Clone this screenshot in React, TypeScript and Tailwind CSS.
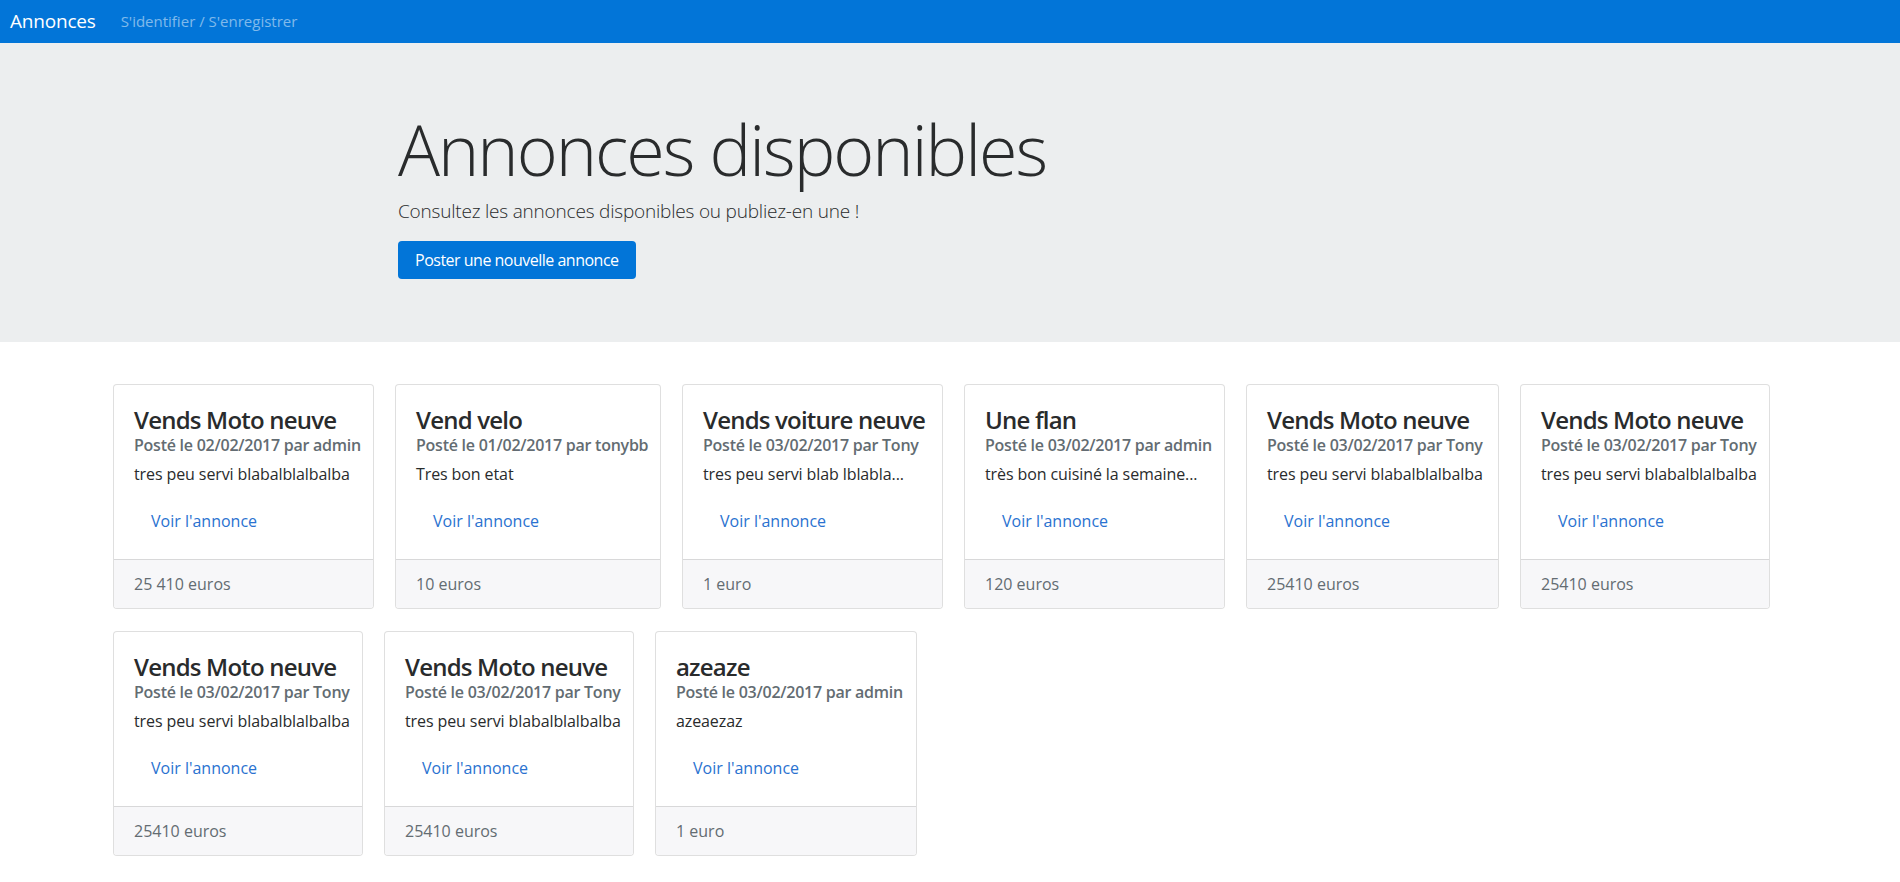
const annonces = [
  { id: 1, titre: "Vends Moto neuve", date: "02/02/2017", auteur: "admin", texte: "tres peu servi blabalblalbalba", prix: "25 410 euros", w: "w-[261px]" },
  { id: 2, titre: "Vend velo", date: "01/02/2017", auteur: "tonybb", texte: "Tres bon etat", prix: "10 euros", w: "w-[266px]" },
  { id: 3, titre: "Vends voiture neuve", date: "03/02/2017", auteur: "Tony", texte: "tres peu servi blab lblabla...", prix: "1 euro", w: "w-[261px]" },
  { id: 4, titre: "Une flan", date: "03/02/2017", auteur: "admin", texte: "très bon cuisiné la semaine...", prix: "120 euros", w: "w-[261px]" },
  { id: 5, titre: "Vends Moto neuve", date: "03/02/2017", auteur: "Tony", texte: "tres peu servi blabalblalbalba", prix: "25410 euros", w: "w-[253px]" },
  { id: 6, titre: "Vends Moto neuve", date: "03/02/2017", auteur: "Tony", texte: "tres peu servi blabalblalbalba", prix: "25410 euros", w: "w-[250px]" },
  { id: 7, titre: "Vends Moto neuve", date: "03/02/2017", auteur: "Tony", texte: "tres peu servi blabalblalbalba", prix: "25410 euros", w: "w-[250px]" },
  { id: 8, titre: "Vends Moto neuve", date: "03/02/2017", auteur: "Tony", texte: "tres peu servi blabalblalbalba", prix: "25410 euros", w: "w-[250px]" },
  { id: 9, titre: "azeaze", date: "03/02/2017", auteur: "admin", texte: "azeaezaz", prix: "1 euro", w: "w-[262px]" },
]

function AnnonceCard({ annonce }: { annonce: (typeof annonces)[number] }) {
  return (
    <div className={`${annonce.w} flex flex-col overflow-hidden rounded border border-black/[0.125] bg-white`}>
      <div className="px-5 pt-5 pb-5">
        <h4 className="whitespace-nowrap text-[24px] leading-[29px] font-semibold tracking-[-0.8px] text-[#292b2c]">
          {annonce.titre}
        </h4>
        <h6 className="mt-[2px] whitespace-nowrap text-[16px] leading-[19px] font-semibold tracking-[-0.25px] text-[#636c72]">
          Posté le {annonce.date} par {annonce.auteur}
        </h6>
        <p className="mt-[7px] whitespace-nowrap text-[16px] leading-6 tracking-[-0.1px] text-[#292b2c]">{annonce.texte}</p>
        <a href="#" className="mt-[17px] block px-[17px] py-[6px] text-[16px] leading-6 text-[#2a72d0]">
          Voir l'annonce
        </a>
      </div>
      <div className="border-t border-black/[0.125] bg-[#f7f7f9] px-5 py-3 text-[16px] leading-6 text-[#636c72]">
        {annonce.prix}
      </div>
    </div>
  )
}

export default function App() {
  return (
    <div className="min-h-screen bg-white font-['Segoe_UI','Open_Sans',sans-serif]">
      {/* Navbar */}
      <nav className="flex h-[43px] items-center bg-[#0275d8] px-[10px]">
        <a href="#" className="text-[19px] leading-none tracking-[-0.2px] text-white">Annonces</a>
        <a href="#" className="ml-[25px] text-[15px] leading-none text-white/50">S'identifier / S'enregistrer</a>
      </nav>

      {/* Jumbotron */}
      <div className="bg-[#eceeef] pt-[67px] pb-[63px]">
        <div className="mx-auto w-[1140px] px-[18px]">
          <h1 className="text-[70px] leading-[78px] font-light tracking-[-2px] text-[#292b2c]">Annonces disponibles</h1>
          <p className="mt-[8px] text-[19px] leading-[30px] font-light tracking-[-0.2px] text-[#292b2c]">
            Consultez les annonces disponibles ou publiez-en une !
          </p>
          <button className="mt-[15px] flex h-[38px] items-center rounded bg-[#0275d8] px-[17px] text-[16px] leading-6 tracking-[-0.5px] text-white">
            Poster une nouvelle annonce
          </button>
        </div>
      </div>

      {/* Liste des annonces */}
      <div className="flex flex-wrap gap-x-[21px] gap-y-[22px] px-[113px] pt-[42px] pb-10">
        {annonces.map((a) => (
          <AnnonceCard key={a.id} annonce={a} />
        ))}
      </div>
    </div>
  )
}
